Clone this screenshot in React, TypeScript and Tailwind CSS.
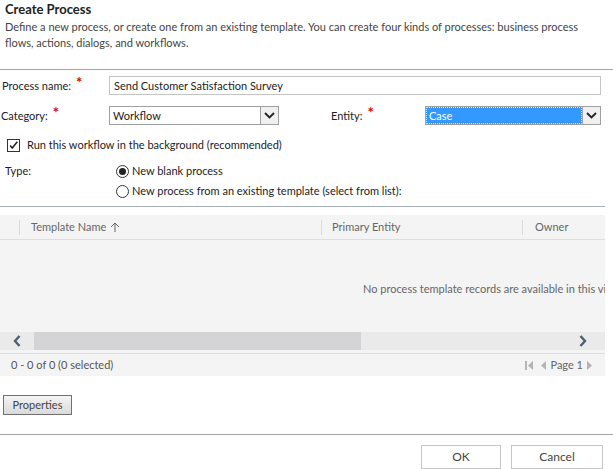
import { useState } from "react";

const font = { fontFamily: 'Lato, "Noto Sans", Arial, sans-serif' };

const Chevron = () => (
    <svg width="11" height="7" viewBox="0 0 11 7">
        <path d="M1 1 L5.5 5.5 L10 1" fill="none" stroke="#222" strokeWidth="1.8" />
    </svg>
);

const DropButton = () => (
    <div className="w-[18px] h-full border-l border-[#a0a0a0] bg-[#f0f0f0] flex items-center justify-center">
        <Chevron />
    </div>
);

const Star = () => <span className="text-[#e00000] text-[15px] font-bold ml-[5px] relative -top-[2px] leading-none">*</span>;

const App = () => {
    //______ STATE ______
    const [background, setBackground] = useState(true);
    const [type, setType] = useState("blank");

    return (
        <div className="w-[613px] h-[469px] bg-white text-[#333] overflow-hidden text-[11px]" style={font}>
            {/* header */}
            <div className="px-[5px] pt-[1px] h-[69px]">
                <h2 className="text-[13px] font-bold text-[#222] leading-[17px]">Create Process</h2>
                <p className="mt-[1px] leading-[16px] text-[#444] text-[11px]">
                    Define a new process, or create one from an existing template. You can create four kinds of processes: business process flows, actions, dialogs, and workflows.
                </p>
            </div>
            <div className="h-px bg-[#a6a6a6]" />

            {/* form */}
            <div className="pt-[6px]">
                <div className="flex items-center h-[19px]">
                    <label className="w-[109px] pl-[2px] text-[#222]">Process name:<Star /></label>
                    <div className="w-[492px] h-[19px] border border-[#c4c4c4] px-[4px] leading-[17px] text-[#222]">Send Customer Satisfaction Survey</div>
                </div>
                <div className="flex items-center h-[19px] mt-[11px]">
                    <label className="w-[109px] pl-[1px] text-[#222]">Category:<Star /></label>
                    <div className="w-[170px] h-[19px] border border-[#a0a0a0] flex">
                        <div className="flex-1 px-[3px] leading-[17px] text-[#222]">Workflow</div>
                        <DropButton />
                    </div>
                    <label className="ml-[52px] w-[94px] text-[#222]">Entity:<Star /></label>
                    <div className="w-[176px] h-[19px] border border-[#a0a0a0] flex">
                        <div className="flex-1 px-[2px] leading-[15px] bg-[#3399ff] text-white border border-dotted border-[#cfe6ff]">Case</div>
                        <DropButton />
                    </div>
                </div>
                <label className="flex items-center h-[16px] mt-[12px] pl-[7px] text-[#222]">
                    <span
                        onClick={() => setBackground(!background)}
                        className="w-[13px] h-[13px] border border-[#333] bg-white flex items-center justify-center"
                    >
                        {background && (
                            <svg width="13" height="13" viewBox="0 0 13 13">
                                <path d="M2.5 6.5 L5 9.5 L11 2" fill="none" stroke="#222" strokeWidth="1.8" />
                            </svg>
                        )}
                    </span>
                    <span className="ml-[7px]">Run this workflow in the background (recommended)</span>
                </label>
                <div className="flex mt-[8px]">
                    <div className="w-[116px] pl-[5px] h-[20px] leading-[20px] text-[#222]">Type:</div>
                    <div className="flex flex-col">
                        {[
                            ["blank", "New blank process"],
                            ["template", "New process from an existing template (select from list):"],
                        ].map(([key, text]) => (
                            <div key={key} className="flex items-center h-[20px] text-[#222]" onClick={() => setType(key)}>
                                <span className="w-[13px] h-[13px] rounded-full border border-[#333] bg-white flex items-center justify-center">
                                    {type === key && <span className="w-[7px] h-[7px] rounded-full bg-[#222]" />}
                                </span>
                                <span className="ml-[3px]">{text}</span>
                            </div>
                        ))}
                    </div>
                </div>
            </div>
            <div className="h-px bg-[#a6b0ba] w-[605px] mt-[5px]" />

            {/* grid */}
            <div className="mt-[8px] w-[605px] bg-[#f4f4f4] h-[161px] flex flex-col text-[#666]">
                <div className="h-[25px] flex items-center border-b border-[#dedede]">
                    <div className="w-[20px] h-[15px] border-r border-[#dcdcdc]" />
                    <div className="w-[302px] pl-[11px] flex items-center h-[15px] border-r border-[#dcdcdc]">
                        Template Name
                        <svg width="10" height="11" viewBox="0 0 10 11" className="ml-[4px]">
                            <path d="M5 10 V1 M1 5 L5 1 L9 5" fill="none" stroke="#666" strokeWidth="1" />
                        </svg>
                    </div>
                    <div className="w-[201px] pl-[10px] h-[15px] flex items-center border-r border-[#dcdcdc]">Primary Entity</div>
                    <div className="pl-[12px]">Owner</div>
                </div>
                <div className="h-[92px] flex items-center overflow-hidden whitespace-nowrap">
                    <span className="ml-[363px] mt-[6px]">No process template records are available in this view.</span>
                </div>
                <div className="h-[18px] flex bg-[#eaeaea]">
                    <div className="w-[34px] flex items-center justify-center">
                        <svg width="8" height="12" viewBox="0 0 8 12">
                            <path d="M6.5 1 L2 6 L6.5 11" fill="none" stroke="#4c5f73" strokeWidth="2.4" />
                        </svg>
                    </div>
                    <div className="w-[327px] bg-[#d4d3d5]" />
                    <div className="flex-1 flex items-center justify-end pr-[18px]">
                        <svg width="8" height="12" viewBox="0 0 8 12">
                            <path d="M1.5 1 L6 6 L1.5 11" fill="none" stroke="#4c5f73" strokeWidth="2.4" />
                        </svg>
                    </div>
                </div>
                <div className="h-[4px] border-b border-[#dedede]" />
                <div className="flex-1 flex items-center justify-between pl-[11px] pr-[12px] text-[#555]">
                    <span>0 - 0 of 0 (0 selected)</span>
                    <span className="flex items-center gap-[4px] text-[#666]">
                        <svg width="9" height="9" viewBox="0 0 9 9">
                            <rect x="0" y="0" width="2" height="9" fill="#b5b5b5" />
                            <path d="M8 0 L3 4.5 L8 9 Z" fill="#b5b5b5" />
                        </svg>
                        <svg width="6" height="9" viewBox="0 0 6 9" className="ml-[2px]">
                            <path d="M6 0 L1 4.5 L6 9 Z" fill="#b5b5b5" />
                        </svg>
                        <span>Page 1</span>
                        <svg width="6" height="9" viewBox="0 0 6 9">
                            <path d="M0 0 L5 4.5 L0 9 Z" fill="#b5b5b5" />
                        </svg>
                    </span>
                </div>
            </div>

            {/* properties */}
            <div className="mt-[19px] pl-[3px]">
                <button className="w-[69px] h-[20px] border border-[#707070] bg-gradient-to-b from-[#f4f4f4] to-[#dadada] text-[11px] text-[#444] leading-[18px]">
                    Properties
                </button>
            </div>
            <div className="h-px bg-[#a6a6a6] mt-[19px]" />

            {/* footer */}
            <div className="flex justify-end gap-[10px] pr-[10px] mt-[10px]">
                <button className="w-[80px] h-[24px] border border-[#c6c6c6] bg-white text-[#444] text-[12px]">OK</button>
                <button className="w-[92px] h-[24px] border border-[#c6c6c6] bg-white text-[#444] text-[12px]">Cancel</button>
            </div>
        </div>
    );
};
export default App;
